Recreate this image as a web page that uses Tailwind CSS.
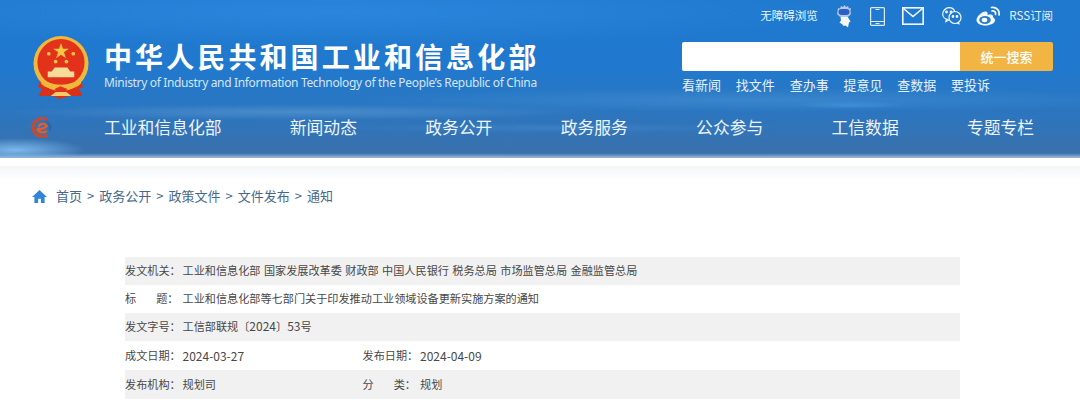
<!DOCTYPE html>
<html lang="zh-CN">
<head>
    <meta charset="UTF-8">
    <meta name="viewport" content="width=device-width, initial-scale=1.0">
    <title>通知</title>
    <script src="https://cdn.jsdelivr.net/npm/@tailwindcss/browser@4"></script>
</head>
<body class="bg-white [font-family:'Noto_Sans_CJK_SC',sans-serif] overflow-hidden">
    <!-- header -->
    <header class="h-[158px] flex flex-col text-white [background-image:radial-gradient(ellipse_70px_12px_at_15px_150px,#7db8ea,transparent),radial-gradient(ellipse_60px_4px_at_850px_105px,#3d8fd8,transparent),radial-gradient(ellipse_420px_12px_at_760px_100px,#3a86cc,transparent),radial-gradient(ellipse_300px_8px_at_300px_112px,#4a8ccb,transparent),radial-gradient(ellipse_220px_5px_at_560px_128px,#3a80c4,transparent),radial-gradient(ellipse_500px_34px_at_330px_12px,#2a86dc,transparent),linear-gradient(180deg,#1f79cf_0%,#2079cf_40%,#2a76c1_68%,#3a71ad_97%,#9dbedc_100%)]">
        <div class="h-[32px] pr-[27px] flex items-center justify-end">
            <span class="text-[11.500px] w-[57px] whitespace-nowrap text-[#eef5fb]">无障碍浏览</span>
            <!-- robot -->
            <svg class="ml-[19px]" width="16" height="24" viewBox="0 0 16 24">
                <path d="M2 4l2 .5L5 2l2 1 1.500-2L10 3l2-1 1 2.500L15 4l-.5 3 .5 3-2.500 2.500h-9L1 10l.5-3z" fill="#b9c9dc"/>
                <rect x="2.500" y="5" width="11" height="6" rx="3" fill="#2b5fd0"/>
                <path d="M4.500 12.500h7l3 5-1.500 1-1 5-2.500-2-2 .5-1-1.500-3-2 1.500-2z" fill="#f5f7fa"/>
            </svg>
            <!-- phone -->
            <svg class="ml-[18px]" width="15" height="19" viewBox="0 0 15 19" fill="none" stroke="#dcebf8" stroke-width="1.200">
                <rect x="0.600" y="0.600" width="13.800" height="17.800" rx="1"/>
                <path d="M.6 14.500h13.800M5.500 16.500h4M5.500 2.500h4"/>
            </svg>
            <!-- mail -->
            <svg class="ml-[17px]" width="22" height="18" viewBox="0 0 22 18" fill="none" stroke="#f4f8fc" stroke-width="1.600">
                <rect x="0.800" y="0.800" width="20.400" height="16.400"/>
                <path d="M1.500 1.500l9.500 8 9.500-8"/>
            </svg>
            <!-- wechat -->
            <svg class="ml-[18px]" width="20" height="18" viewBox="0 0 20 18" fill="none" stroke="#f2f7fc" stroke-width="1.200">
                <path d="M6.500 12.500C3 12.500.7 10 .7 7S3.500.7 7 .7c3 0 5.200 1.800 5.800 4"/>
                <path d="M4.500 12l-.7 2.500 3-1.500"/>
                <circle cx="13" cy="10.500" r="6"/>
                <path d="M15.500 15.800l2 1.500"/>
                <circle cx="4.500" cy="5" r="0.800" fill="#f2f7fc"/>
                <circle cx="9" cy="5" r="0.800" fill="#f2f7fc"/>
                <circle cx="11" cy="9.500" r="0.800" fill="#f2f7fc"/>
                <circle cx="15" cy="9.500" r="0.800" fill="#f2f7fc"/>
            </svg>
            <!-- weibo -->
            <svg class="ml-[14px]" width="25" height="20" viewBox="0 0 25 20">
                <path d="M9.500 19.500C4.500 19.500.5 17.300.5 14 .5 10.500 6 5.500 9.500 5.500c2 0 2.500 1.500 2 3.500 3-1 5.500-.5 5.500 1.500 0 .6 0 1 .5 1.300 1 .5 1.500 1.500 1.500 2.700 0 2.500-4.500 5-9.500 5z" fill="#f7fafd"/>
                <ellipse cx="9" cy="14" rx="5.800" ry="4" fill="#2a7ccb"/>
                <ellipse cx="8.500" cy="14" rx="2.800" ry="2.200" fill="#f7fafd"/>
                <path d="M15.500 1.500c4.500-1 8.500 3 7.500 7.500M16 5c2.300-.5 4 1 3.500 3.300" fill="none" stroke="#f7fafd" stroke-width="1.700" stroke-linecap="round"/>
            </svg>
            <span class="ml-[8px] text-[11.500px] whitespace-nowrap text-[#e6f0fa]">RSS订阅</span>
        </div>

        <div class="h-[66px] pl-[33px] flex">
            <!-- emblem -->
            <svg class="mt-[4px]" width="56" height="63" viewBox="0 0 57 64">
                <path d="M7 45L5 52l4 1-3 8h14l8 3 9-3h13l-3-8 4-1-2-7z" fill="#d9301c"/>
                <circle cx="28.500" cy="28" r="28" fill="#f0b93c"/>
                <circle cx="28.500" cy="27" r="24" fill="#e3321c"/>
                <path d="M28.500 7l2 6h6l-5 3.600 2 6-5-3.700-5 3.700 2-6-5-3.600h6z" fill="#f6c542"/>
                <circle cx="16" cy="18" r="1.900" fill="#f6c542"/>
                <circle cx="41" cy="18" r="1.900" fill="#f6c542"/>
                <circle cx="23" cy="26" r="1.900" fill="#f6c542"/>
                <circle cx="34" cy="26" r="1.900" fill="#f6c542"/>
                <path d="M19 36l3-4h13l3 4h4v6H15v-6z" fill="#f6dc9a"/>
                <path d="M9 42c6 10 33 10 39 0l1 6c-4 5-14 7-20.500 7S12 53 8 48z" fill="#f0b93c"/>
                <path d="M22 54l6-3 7 3-2 3h-9z" fill="#e3321c"/>
                <path d="M23 57h11l5 4H18z" fill="#f3ca6c"/>
            </svg>
            <div class="ml-[15px] pt-[7px] w-[433px]">
                <h1 class="text-[28px] leading-[34px] font-bold tracking-[3.100px] whitespace-nowrap">中华人民共和国工业和信息化部</h1>
                <p class="[font-family:'Noto_Sans',sans-serif] text-[12px] leading-[16px] mt-[2px] tracking-[-0.340px] whitespace-nowrap text-[#d5e5f4]">Ministry of Industry and Information Technology of the People’s Republic of China</p>
            </div>
            <div class="ml-auto mr-[27px] mt-[10px] w-[371px]">
                <form class="h-[29px] flex rounded-[2px] overflow-hidden">
                    <input class="w-[278px] bg-white" type="text" aria-label="搜索">
                    <button class="flex-1 bg-[#f2b544] text-[13px] font-medium text-white" type="button">统一搜索</button>
                </form>
                <div class="mt-[5px] flex gap-[14.800px] text-[13px] leading-[18px] text-[#e8f1fa]">
                    <a>看新闻</a><a>找文件</a><a>查办事</a><a>提意见</a><a>查数据</a><a>要投诉</a>
                </div>
            </div>
        </div>

        <nav class="mt-[8px] pl-[31px] flex items-center h-[43px]">
            <svg width="21" height="21" viewBox="0 0 21 21">
                <path d="M16 18a9 9 0 1 1 0-15" fill="none" stroke="#d8451f" stroke-width="3.600" stroke-dasharray="2.200 .6"/>
                <path d="M6 11.500c3 1 7 .5 10-2.500-2-3-7-3-8.500 1M6 11.500c1 4 6 5 10 2.500" fill="none" stroke="#ec5a24" stroke-width="2.200"/>
                <path d="M14 3c3 1 6 4 7 7-1 2-2 3-3 4 0-4-1-8-4-11z" fill="#2b66a8"/>
            </svg>
            <ul class="ml-[52px] flex gap-[68.300px] text-[16.800px] whitespace-nowrap text-[#eef4fa]">
                <li>工业和信息化部</li>
                <li>新闻动态</li>
                <li>政务公开</li>
                <li>政务服务</li>
                <li>公众参与</li>
                <li>工信数据</li>
                <li>专题专栏</li>
            </ul>
        </nav>
    </header>

    <div class="h-[8px] bg-white"></div>
    <div class="h-[14px] bg-gradient-to-b from-[#f3f5f8] to-white"></div>

    <!-- breadcrumb -->
    <div class="pl-[32px] mt-[6px] h-[20px] flex items-center text-[13px] text-[#47688c] whitespace-nowrap">
        <svg width="15" height="13" viewBox="0 0 16 14">
            <path d="M8 0L0 7.500h2.500V14H6.500V9.500h3V14h4V7.500H16z" fill="#2f86d8"/>
        </svg>
        <span class="ml-[9px]">首页</span>
        <span class="mx-[5px]">&gt;</span>
        <span>政务公开</span>
        <span class="mx-[5px]">&gt;</span>
        <span>政策文件</span>
        <span class="mx-[5px]">&gt;</span>
        <span>文件发布</span>
        <span class="mx-[5px]">&gt;</span>
        <span>通知</span>
    </div>

    <!-- info table -->
    <div class="mt-[51px] ml-[125px] w-[835px] text-[11.150px] text-[#484848] whitespace-nowrap">
        <div class="h-[28px] pb-[2px] flex items-center bg-[#f1f1f1]">
            <span class="w-[57.500px]">发文机关：</span><span class="[word-spacing:0.900px]">工业和信息化部 国家发展改革委 财政部 中国人民银行 税务总局 市场监管总局 金融监管总局</span>
        </div>
        <div class="h-[28px] pb-[2px] flex items-center">
            <span class="w-[57.500px] flex justify-between pr-[4px]"><span>标</span><span>题：</span></span><span>工业和信息化部等七部门关于印发推动工业领域设备更新实施方案的通知</span>
        </div>
        <div class="h-[28px] pb-[2px] flex items-center bg-[#f1f1f1]">
            <span class="w-[57.500px]">发文字号：</span><span>工信部联规〔<span class="text-[12px]">2024</span>〕<span class="text-[12px]">53</span>号</span>
        </div>
        <div class="h-[29px] flex items-center">
            <span class="w-[57.500px]">成文日期：</span><span class="w-[180px] text-[12px]">2024-03-27</span>
            <span class="w-[57.500px]">发布日期：</span><span class="text-[12px]">2024-04-09</span>
        </div>
        <div class="h-[29px] flex items-center bg-[#f1f1f1]">
            <span class="w-[57.500px]">发布机构：</span><span class="w-[180px]">规划司</span>
            <span class="w-[57.500px] flex justify-between pr-[4px]"><span>分</span><span>类：</span></span><span>规划</span>
        </div>
    </div>
</body>
</html>
